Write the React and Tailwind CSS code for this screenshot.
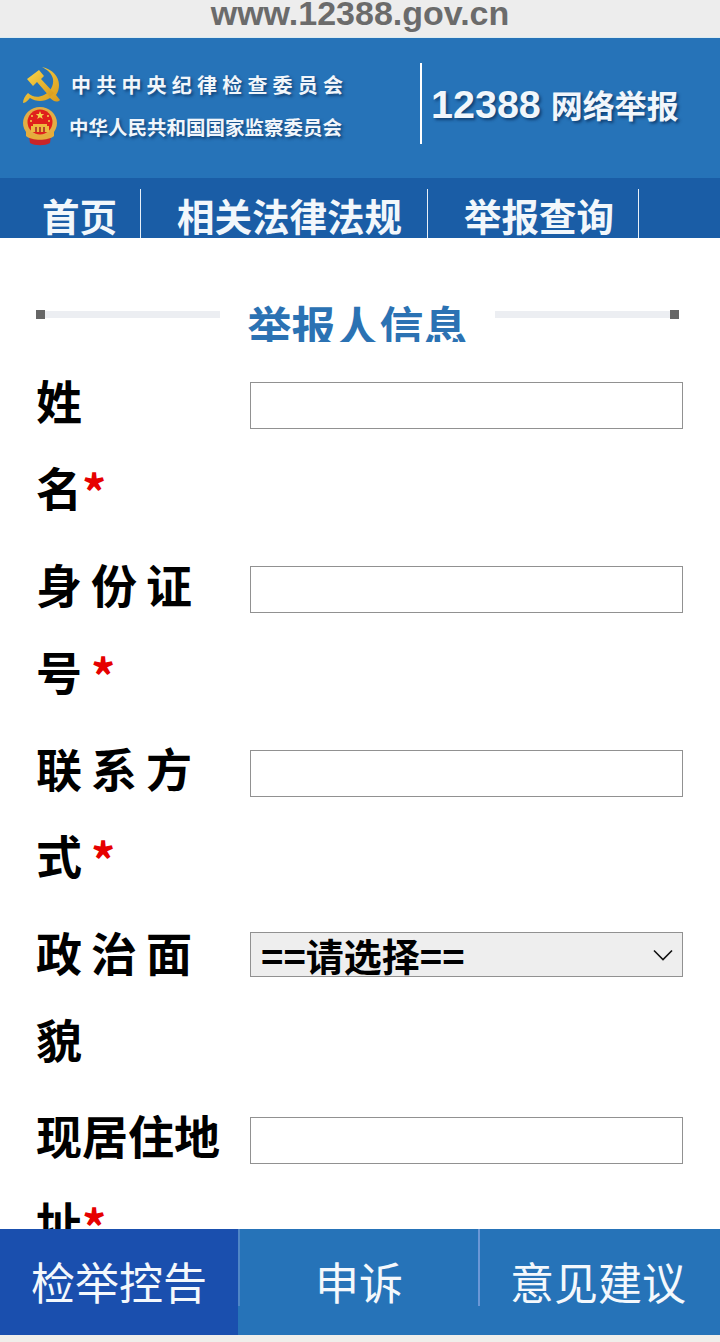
const CJK = "font-['Noto_Sans_CJK_SC','Noto_Sans_CJK_JP',sans-serif]";

function Hammer() {
  return (
    <svg width="38" height="38" viewBox="0 0 38 38" className="block">
      <defs>
        <linearGradient id="g1" x1="0" y1="0" x2="1" y2="1">
          <stop offset="0" stopColor="#f7d64a" />
          <stop offset="1" stopColor="#d99a1c" />
        </linearGradient>
      </defs>
      <path d="M20 1 C30 3 37 10 37 19 C37 23 36 26 34 29 L38 34 C35 37 31 35 28 32 C22 36 14 36 8 32 C6 34 4 37 1 37 C1 33 3 30 6 27 C10 31 16 32 22 29 C28 26 32 20 31 13 C30 8 26 4 20 1 Z" fill="url(#g1)" />
      <path d="M5 13 L17 4 L22 10 L19 13 L32 27 L28 31 L15 16 L11 20 Z" fill="url(#g1)" />
    </svg>
  );
}

function Emblem() {
  return (
    <svg width="36" height="40" viewBox="0 0 36 40" className="block">
      <ellipse cx="18" cy="16" rx="17" ry="16" fill="#e3ad45" />
      <circle cx="18" cy="15" r="12.500" fill="#e0201c" />
      <path d="M18 4 l1.200 3 h3 l-2.400 2 1 3 -2.800-1.800 -2.800 1.800 1-3 L13.800 7 h3 Z" fill="#f5d04a" />
      <circle cx="10" cy="9" r="1" fill="#f5d04a" />
      <circle cx="26" cy="9" r="1" fill="#f5d04a" />
      <circle cx="9" cy="14" r="1" fill="#f5d04a" />
      <circle cx="27" cy="14" r="1" fill="#f5d04a" />
      <path d="M11 17 H25 V19 H27 V25 H9 V19 H11 Z" fill="#eeb93f" />
      <path d="M13 20 H15 V25 H13 Z M17 20 H19 V25 H17 Z M21 20 H23 V25 H21 Z" fill="#b5482a" />
      <path d="M7 29 C12 33 24 33 29 29 L28 36 C23 39 13 39 8 36 Z" fill="#c9252a" />
      <path d="M4 23 C9 30 27 30 32 23 L32 29 C26 34 10 34 4 29 Z" fill="#e6ad3a" />
    </svg>
  );
}

function Section() {
  return (
    <div className="flex items-start">
      <div className="relative mt-[2px] w-[184px] h-[7px] bg-[#eceef2]">
        <div className="absolute left-0 -top-[1px] w-[9px] h-[9px] bg-[#666666]" />
      </div>
      <div className="w-[275px] h-[43px] overflow-hidden text-center text-[44px] leading-[52px] font-bold text-[#2b72b3] -mt-[10px]">举报人信息</div>
      <div className="relative mt-[2px] w-[184px] h-[7px] bg-[#eceef2]">
        <div className="absolute right-0 -top-[1px] w-[9px] h-[9px] bg-[#666666]" />
      </div>
    </div>
  );
}

function Row({ first, second, wide, star, select, tall = true }) {
  const track = wide ? "tracking-[9px]" : "";
  return (
    <div className={`flex items-start ${tall ? "h-[184px]" : "h-[183px]"}`}>
      <div className={`w-[214px] shrink-0 text-[46px] leading-[87px] font-bold text-black whitespace-nowrap -mt-[8px] ${track}`}>
        <div>{first}</div>
        <div>
          {second}
          {star && <span className="text-[#e60000] text-[48px] font-bold tracking-normal align-[-5px]">*</span>}
        </div>
      </div>
      <div className={`flex-1 ${select ? "pt-[16px]" : "pt-[18px]"}`}>
        {select ? (
          <div className="flex items-center justify-between h-[45px] border border-[#919191] bg-[#eeeeee] pl-[10px] pr-[9px] text-[38px] leading-[43px] font-bold text-black">
            <span>==请选择==</span>
            <svg width="20" height="12" viewBox="0 0 20 12" fill="none" stroke="#111" strokeWidth="1.6"><path d="M1 1.500 L10 10.500 L19 1.500" /></svg>
          </div>
        ) : (
          <input className="block w-full h-[47px] border border-[#919191] bg-white" />
        )}
      </div>
    </div>
  );
}

export default function App() {
  return (
    <div className={`relative w-[720px] h-[1342px] overflow-hidden bg-white ${CJK}`}>
      <div className="h-[38px] bg-[#ededed] overflow-hidden border-b border-[#dcecf2] text-center font-['Liberation_Sans',sans-serif] font-bold text-[34px] leading-[27px] text-[#6b6b6b]">www.12388.gov.cn</div>

      <header className="flex items-start h-[140px] bg-[#2673b8] pt-[25px] pl-[22px]">
        <div className="w-[398px] shrink-0">
          <div className="flex items-center h-[43px]">
            <Hammer />
            <span className="ml-[11px] text-[20px] leading-[24px] font-semibold tracking-[5.200px] text-[#f1f6fb] whitespace-nowrap [text-shadow:2px_2px_3px_rgba(0,30,70,0.55)]">中共中央纪律检查委员会</span>
          </div>
          <div className="flex items-center h-[42px]">
            <Emblem />
            <span className="ml-[11px] text-[19.500px] leading-[24px] font-semibold text-[#f1f6fb] whitespace-nowrap [text-shadow:2px_2px_3px_rgba(0,30,70,0.55)]">中华人民共和国国家监察委员会</span>
          </div>
        </div>
        <div className="w-[2px] h-[81px] bg-white" />
        <div className="ml-[9px] mt-[19px] font-bold text-[32px] leading-[44px] text-[#f1f6fb] whitespace-nowrap [text-shadow:2px_2px_3px_rgba(0,30,70,0.6)]">
          <span className="font-['Liberation_Sans',sans-serif] text-[39.500px]">12388</span>
          <span className="ml-[10px]">网络举报</span>
        </div>
      </header>

      <nav className="flex h-[60px] bg-[#1a5da6] pt-[11px] overflow-hidden text-[37.500px] font-bold text-[#f2f7fb]">
        <div className="w-[141px] h-[49px] pl-[42px] border-r border-[#e8f0f8] leading-[52px] whitespace-nowrap">首页</div>
        <div className="w-[287px] h-[49px] pl-[36px] border-r border-[#e8f0f8] leading-[52px] whitespace-nowrap">相关法律法规</div>
        <div className="w-[211px] h-[49px] pl-[36px] border-r border-[#e8f0f8] leading-[52px] whitespace-nowrap">举报查询</div>
      </nav>

      <main className="pl-[36px] pr-[37px] pt-[71px]">
        <Section />
        <div className="mt-[22px]">
          <Row first="姓" second="名" star />
          <Row first="身份证" second="号" wide star />
          <Row first="联系方" second="式" wide star />
          <Row first="政治面" second="貌" wide select tall={false} />
          <Row first="现居住地" second="址" star />
        </div>
      </main>

      <div className="absolute left-0 right-0 top-[1229px] h-[113px] bg-[#f0eeea]">
        <div className="flex h-[106px] bg-[#2673b8] text-[44px] text-[#f4f8fc] leading-[104px] text-center">
          <div className="w-[238px] bg-[#1a4fae]">检举控告</div>
          <div className="w-[2px] h-[77px] bg-[#4f86c6]" />
          <div className="w-[238px]">申诉</div>
          <div className="w-[2px] h-[77px] bg-[#6a97d6]" />
          <div className="flex-1 pr-[4px]">意见建议</div>
        </div>
      </div>
    </div>
  );
}
